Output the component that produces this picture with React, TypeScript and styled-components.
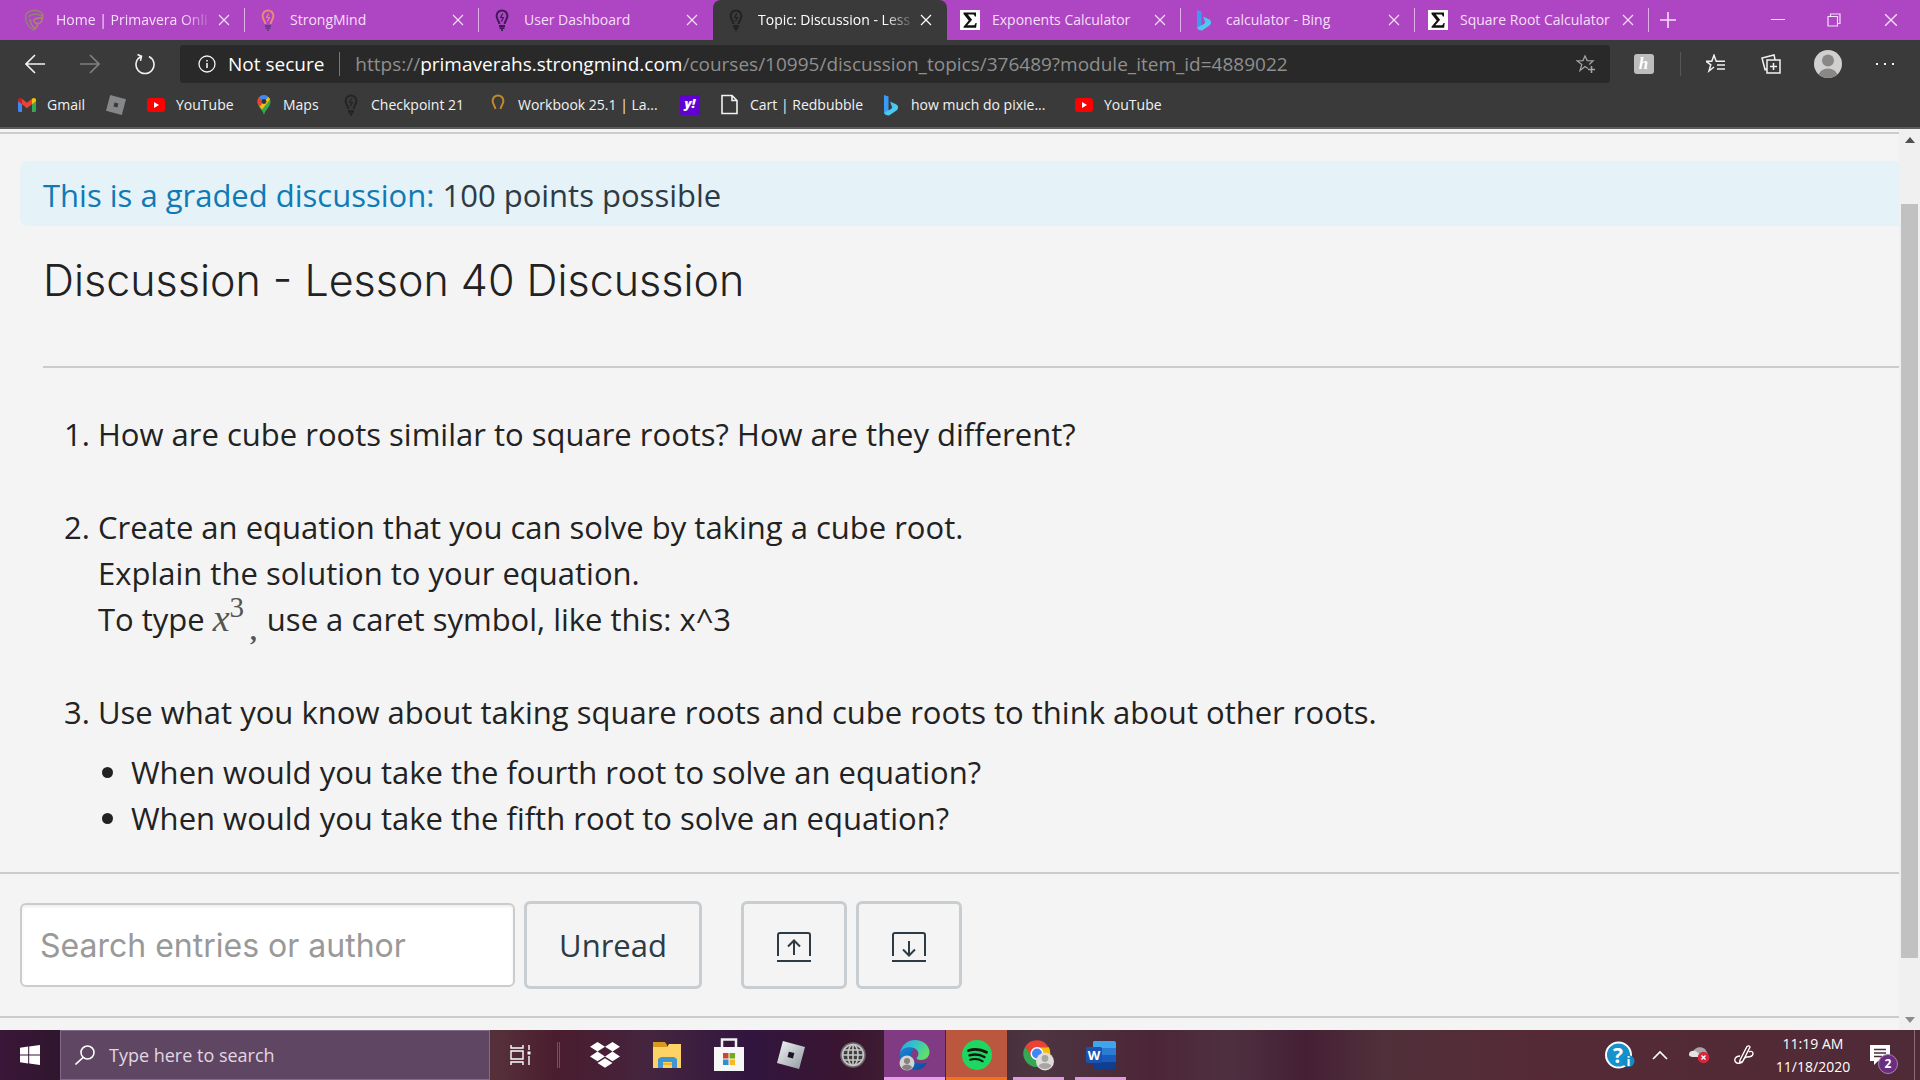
import React from 'react';
import styled, { createGlobalStyle, css } from 'styled-components';

const ui = `"Open Sans", "Noto Sans", sans-serif`;
const heading = `Inter, "Open Sans", sans-serif`;

const GlobalStyle = createGlobalStyle`
  *, *::before, *::after { box-sizing: border-box; }
  body { margin: 0; font-family: ${ui}; background: #f4f4f4; overflow: hidden; }
  button { padding: 0; border: 0; background: none; color: inherit; font: inherit; }
  a { color: inherit; text-decoration: none; }
  svg { display: block; flex: none; }
`;

const Screen = styled.div`
  display: grid;
  grid-template-rows: auto minmax(0, 1fr) auto;
  height: 100vh;
`;

/* ---------- browser chrome ---------- */

const Chrome = styled.header`
  background: #3a3a3a;
  border-bottom: 2px solid #5c5c5c;
`;

const TabStrip = styled.div`
  display: flex;
  height: 40px;
  padding-left: 11px;
  background: #ae45c2;
`;

const Tab = styled.div<{ $active?: boolean }>`
  display: flex;
  align-items: center;
  flex: 0 1 234px;
  min-width: 0;
  padding-left: 13px;
  color: ${p => (p.$active ? '#ffffff' : '#f6dffa')};
  background: ${p => (p.$active ? '#3a3a3a' : 'transparent')};
  border-radius: 8px 8px 0 0;
`;

const TabLabel = styled.span<{ $fade?: boolean }>`
  flex: 1;
  min-width: 0;
  margin: 0 4px 0 12px;
  overflow: hidden;
  white-space: nowrap;
  font-size: 14px;
  line-height: 20px;
  ${p => p.$fade && css`mask-image: linear-gradient(90deg, #000 80%, transparent);`}
`;

const TabEdge = styled.span<{ $visible: boolean }>`
  width: 1px;
  height: 24px;
  margin-left: 14px;
  background: ${p => (p.$visible ? '#e0b0e8' : 'transparent')};
`;

const IconButton = styled.button<{ $w?: number }>`
  display: flex;
  align-items: center;
  justify-content: center;
  flex: none;
  width: ${p => (p.$w ? `${p.$w}px` : 'auto')};
`;

const NewTab = styled(IconButton)`
  color: #f6dffa;
  margin-left: 10px;
`;

const WindowButtons = styled.div`
  display: flex;
  margin-left: auto;
  color: #f6dffa;
`;

const Toolbar = styled.div`
  display: flex;
  align-items: center;
  height: 48px;
  padding-left: 7px;
  color: #f2f2f2;
`;

const AddressBar = styled.div`
  display: flex;
  align-items: center;
  flex: 1;
  height: 38px;
  margin: 0 12px 0 8px;
  padding: 0 14px 0 18px;
  border-radius: 4px;
  background: #292929;
  font-size: 19px;
`;

const Secure = styled.span`
  margin-left: 12px;
  color: #ffffff;
`;

const Rule = styled.span<{ $color: string }>`
  width: 1px;
  height: 24px;
  margin: 0 15px;
  background: ${p => p.$color};
`;

const Url = styled.span`
  flex: 1;
  color: #8f8f8f;
  white-space: nowrap;
  b { color: #ffffff; font-weight: 400; }
`;

const Bookmarks = styled.nav`
  display: flex;
  align-items: center;
  height: 39px;
  padding: 0 0 6px 17px;
  color: #f2f2f2;
  font-size: 14px;
`;

const Bookmark = styled.a<{ $w: number }>`
  display: flex;
  align-items: center;
  gap: 10px;
  flex: 0 1 ${p => p.$w}px;
  white-space: nowrap;
`;

/* ---------- page ---------- */

const Viewport = styled.div`
  display: flex;
  min-height: 0;
  background: #f4f4f4;
`;

const Page = styled.main`
  flex: 1;
  min-width: 0;
  overflow: hidden;
  margin-top: 3px;
  border-top: 2px solid #cccccc;
  color: #222222;
  font-size: 31px;
  line-height: 46px;
`;

const Notice = styled.p`
  margin: 27px 0 0 20px;
  padding: 11px 23px 8px;
  border-radius: 8px 0 0 8px;
  background: #e5f2f8;
  color: #2d3b45;
  em { color: #0f7ab5; font-style: normal; }
`;

const Title = styled.h1`
  margin: 26px 0 0 43px;
  padding-bottom: 58px;
  border-bottom: 2px solid #cccccc;
  font-family: ${heading};
  font-size: 43px;
  font-weight: 300;
  line-height: 56px;
`;

const Questions = styled.ol`
  display: flex;
  flex-direction: column;
  gap: 47px;
  margin: 43px 0 0;
  padding: 0 0 31px 98px;
`;

const SubQuestions = styled.ul`
  margin: 14px 0 0;
  padding: 0 0 0 33px;
  list-style: disc;
`;

const Formula = styled.span`
  margin: 0 10px 0 8px;
  color: #555555;
  font-family: "Liberation Serif", serif;
  font-size: 38px;
  line-height: 0;
  sup { font-size: 29px; }
  sub { font-size: 27px; font-weight: 700; margin-left: 6px; }
`;

const Filters = styled.section`
  display: flex;
  align-items: center;
  padding: 27px 20px;
  border: solid #cccccc;
  border-width: 2px 0;
`;

const SearchInput = styled.input`
  width: 495px;
  height: 84px;
  padding: 0 18px;
  border: 2px solid #cccccc;
  border-radius: 6px;
  background: #ffffff;
  box-shadow: inset 0 2px 3px #eeeeee;
  font-family: ${heading};
  font-size: 32px;
  &::placeholder { color: #999999; opacity: 1; }
`;

const FilterButton = styled.button<{ $w: number; $gap: number }>`
  display: flex;
  align-items: center;
  justify-content: center;
  width: ${p => p.$w}px;
  height: 88px;
  margin-left: ${p => p.$gap}px;
  border: 3px solid #c7cdd1;
  border-radius: 6px;
  color: #2d3b45;
`;

const Scrollbar = styled.div`
  display: grid;
  grid-template-rows: 22px 53fr 754fr 52fr 20px;
  width: 21px;
  background: #f0f0f0;
  color: #505050;
`;

const Thumb = styled.div`
  grid-row: 3;
  margin: 0 2px;
  background: #c1c1c1;
`;

const ScrollArrow = styled(IconButton)<{ $row: number }>`
  grid-row: ${p => p.$row};
`;

/* ---------- taskbar ---------- */

const Taskbar = styled.footer`
  display: flex;
  height: 50px;
  color: #ffffff;
  background: linear-gradient(90deg, #3a1638 0, #30162f 3%, #55303a 26%, #4a1c2e 29%, #44253f 34%,
    #32153f 39%, #3a1530 44%, #4d3540 54%, #4c2638 60%, #4e3040 64%, #452035 68%, #50303a 72%,
    #552a36 80%, #4f2b37 100%);
`;

const TaskSearch = styled.label`
  display: flex;
  align-items: center;
  gap: 14px;
  width: 430px;
  padding: 0 14px;
  border: 1px solid #82698a;
  background: #5f4662;
  input {
    flex: 1;
    min-width: 0;
    padding: 0;
    border: 0;
    outline: 0;
    background: none;
    font: 18px ${ui};
  }
  input::placeholder { color: #e2d6e4; opacity: 1; }
`;

const TaskDivider = styled.span`
  width: 3px;
  height: 26px;
  margin: 12px 14px 0 6px;
  border: solid #75505f;
  border-width: 0 1px;
`;

const TaskItem = styled.button<{ $bg?: string; $line?: string; $inset?: boolean }>`
  display: flex;
  flex-direction: column;
  align-items: center;
  justify-content: center;
  position: relative;
  width: 61px;
  margin-right: 1px;
  background: ${p => p.$bg ?? 'none'};
  &::after {
    content: '';
    position: absolute;
    bottom: 0;
    left: ${p => (p.$inset ? 5 : 0)}px;
    right: ${p => (p.$inset ? 5 : 0)}px;
    height: 3px;
    background: ${p => p.$line ?? 'none'};
  }
`;

const Tray = styled.div`
  display: flex;
  align-items: center;
  margin-left: auto;
`;

const Clock = styled.time`
  width: 90px;
  font-size: 14px;
  line-height: 23px;
  text-align: center;
`;

const ShowDesktop = styled.button`
  width: 6px;
  height: 50px;
  border-left: 1px solid #8a6b76;
`;

/* ---------- drawings ---------- */

type Box = { w: number; h?: number; vb?: string; children: React.ReactNode };
const Line = ({ w, h = w, vb, children }: Box) => (
  <svg width={w} height={h} viewBox={vb ?? `0 0 ${w} ${h}`} fill="none" stroke="currentColor" strokeWidth="1.6" aria-hidden="true">
    {children}
  </svg>
);

const Cross = ({ w = 12 }: { w?: number }) => (
  <Line w={w} vb="0 0 12 12"><path d="M1 1l10 10M11 1L1 11" strokeWidth="1.2" /></Line>
);

const Bulb = ({ color, base = color, bolt = true }: { color: string; base?: string; bolt?: boolean }) => (
  <svg width="20" height="22" viewBox="0 0 20 22" fill="none" stroke={color} aria-hidden="true">
    <path d="M7.4 15c0-3-2.8-4.400-2.800-8.200a5.400 5.400 0 0 1 10.800 0c0 3.800-2.800 5.200-2.800 8.200" strokeWidth="2" />
    {bolt && <path d="M10.800 4.500L8.600 8.500h2.800l-2.100 4" strokeWidth="1.200" />}
    <path d="M7 17h6M7.500 19.200h5M9 21.200h2" stroke={base} strokeWidth="1.800" />
  </svg>
);

const Shield = () => (
  <svg width="20" height="22" viewBox="0 0 20 22" fill="none" strokeWidth="1.600" aria-hidden="true">
    <path d="M1.500 6C4 2.500 8 1 12 1.500c3 .400 5.500 1.500 6.500 3.500" stroke="#9c7d72" />
    <path d="M1.500 6c0 6 2 12 8 15M4 8c4-3.500 10-3.500 14-1" stroke="#8f8079" />
    <path d="M18.500 5c.500 6-1 9-4 9.500-3 .500-5-1.500-4.500-4 3-1.500 6-1.500 8-1M14 15c-1 3-2 4.500-4.500 6M6 10c.500 4 2 7 4.500 9" stroke="#a58675" />
  </svg>
);

const Sigma = () => (
  <svg width="20" height="20" viewBox="0 0 20 20" aria-hidden="true">
    <path fill="#fff" d="M0 0h20v20H0z" />
    <path fill="#111" d="M3.500 2.500h12.500V6.500h-1.300c-.300-1.500-.800-2-2.200-2H7.800l4.300 5.200-4.800 5.500h5.700c1.500 0 2-.700 2.500-2.300h1.200l-.600 4.800H3.500v-1l5.200-6.200-5.200-6.600z" />
  </svg>
);

const Bing = () => (
  <svg width="20" height="22" viewBox="0 0 20 22" aria-hidden="true">
    <defs><linearGradient id="bing" x1="0" y1="0" x2="1" y2="1"><stop stopColor="#49b8ef" /><stop offset="1" stopColor="#48d6f0" /></linearGradient></defs>
    <path fill="#3d9af2" d="M3 1l4.500 1.500V17L3 19z" />
    <path fill="url(#bing)" d="M9 7.500l6 2.700c2.800 1.500 2.500 4.500.800 6L8 21.500c-2.500 0-5-1-5-3l7-3.500 1.200-1.500z" />
  </svg>
);

const Gmail = () => (
  <svg width="20" height="16" viewBox="0 0 20 16" aria-hidden="true">
    <path fill="#4285f4" d="M1 3l4 3v9H2.200C1.500 15 1 14.500 1 13.800z" />
    <path fill="#34a853" d="M15 6l4-3v10.800c0 .700-.500 1.200-1.200 1.200H15z" />
    <path fill="#ea4335" d="M5 1.800l5 4 5-4v5.400l-5 4-5-4z" />
    <path fill="#c5221f" d="M1 3c0-2 2.200-2.600 4-1.200v5.400L1 4.200z" />
    <path fill="#fbbc04" d="M19 3c0-2-2.200-2.600-4-1.200v5.400l4-3z" />
  </svg>
);

const Roblox = ({ w = 20, fill = '#858788', hole = '#3a3a3a' }: { w?: number; fill?: string; hole?: string }) => (
  <svg width={w} height={w} viewBox="0 0 20 20" aria-hidden="true">
    <defs><linearGradient id="rblx" x1="0" y1="0" x2="1" y2="1"><stop stopColor="#f4f6f8" /><stop offset="1" stopColor="#8e979f" /></linearGradient></defs>
    <path fill={fill} d="M4.200 0L20 4.200 15.800 20 0 15.800z" />
    <path fill={hole} d="M8.500 7.600l3.900 1-1 3.900-3.900-1z" />
  </svg>
);

const YouTube = () => (
  <svg width="20" height="14" viewBox="0 0 20 14" aria-hidden="true">
    <rect x="1" width="18" height="14" rx="3" fill="#f00" /><path fill="#fff" d="M8 4l5 3-5 3z" />
  </svg>
);

const MapPin = () => (
  <svg width="18" height="20" viewBox="0 0 18 20" aria-hidden="true">
    <path fill="#34a853" d="M9 20C8 15 2.500 12 2.500 6.500a6.500 6.500 0 0 1 13 0C15.500 12 10 15 9 20z" />
    <path fill="#fbbc04" d="M4.500 11.500L13 2a6 6 0 0 1 2 2.500L7 14.500z" />
    <path fill="#ea4335" d="M3 9C2 6 2.500 4 4 2.300L9 6.500l-4.500 5z" />
    <path fill="#4285f4" d="M4 2.300C6-.400 10.500-.600 13 2L9 6.500z" />
    <circle cx="9" cy="6.500" r="2.400" fill="#24364f" />
  </svg>
);

const YahooBadge = styled.span`
  width: 20px;
  height: 20px;
  border-radius: 2px;
  background: #6001d2;
  color: #ffffff;
  font-size: 13px;
  font-weight: 800;
  font-style: italic;
  line-height: 17px;
  text-align: center;
`;

const HoneyBadge = styled.span`
  width: 20px;
  height: 20px;
  border-radius: 3px;
  background: #bdbdbd;
  color: #ffffff;
  font: italic 700 17px/20px "Liberation Serif", serif;
  text-align: center;
`;

const PageIcon = () => (
  <Line w={20} h={21}><path d="M2 1.500h10l5 5v13H2zM12 1.500v5h5" /></Line>
);

const Person = ({ w = 28 }: { w?: number }) => (
  <svg width={w} height={w} viewBox="0 0 28 28" aria-hidden="true">
    <defs><clipPath id="face"><circle cx="14" cy="14" r="14" /></clipPath></defs>
    <g clipPath="url(#face)"><path fill="#d2d0ce" d="M0 0h28v28H0z" /><circle cx="14" cy="10.500" r="6" fill="#8a8886" /><ellipse cx="14" cy="26" rx="9.500" ry="7.500" fill="#8a8886" /></g>
  </svg>
);

const Dropbox = () => (
  <svg width="30" height="26" viewBox="0 0 30 26" fill="#fff" aria-hidden="true">
    <path d="M7.500 0L15 4.800 7.500 9.600 0 4.800zM22.500 0L30 4.800l-7.500 4.800L15 4.800zM7.500 9.600l7.500 4.800-7.500 4.800L0 14.400zM22.500 9.600l7.500 4.800-7.500 4.800-7.500-4.800zM15 16.200l7.500 4.800-7.500 4.800L7.500 21z" />
  </svg>
);

const Folder = () => (
  <svg width="28" height="26" viewBox="0 -1 28 26" aria-hidden="true">
    <path fill="#d99a1c" d="M0 -1h12l2 3v5H0z" /><path fill="#fcd364" d="M0 4h14l2-3h12v24H0z" />
    <path fill="#3f96d0" d="M5 25V16l3-2h13l3 2v9h-5v-6h-9v6z" /><path fill="#f2b233" d="M10 20h9v2h-9z" />
  </svg>
);

const Store = () => (
  <svg width="30" height="34" viewBox="0 -2 30 34" aria-hidden="true">
    <path d="M8 9V-.500h14V9" fill="none" stroke="#f1f1f1" strokeWidth="2.500" /><path fill="#f6f6f6" d="M0 7h30v24H0z" />
    <path fill="#c9472a" d="M9 13h5.500v5.500H9z" /><path fill="#71ab1e" d="M15.500 13H21v5.500h-5.500z" />
    <path fill="#2c90d4" d="M9 19.500h5.500V25H9z" /><path fill="#fbb91b" d="M15.500 19.500H21V25h-5.500z" />
  </svg>
);

const Globe = () => (
  <svg width="26" height="26" viewBox="0 0 26 26" fill="none" stroke="#c6c6c6" strokeWidth="1.600" aria-hidden="true">
    <circle cx="13" cy="13" r="12" fill="#3e3e3e" stroke="#6a6a6a" /><circle cx="13" cy="13" r="10.500" />
    <ellipse cx="13" cy="13" rx="5" ry="10.500" /><path d="M13 2.500v21M2.500 13h21M4 8h18M4 18h18" />
  </svg>
);

const Edge = () => (
  <svg width="34" height="34" viewBox="0 0 34 34" aria-hidden="true">
    <defs>
      <linearGradient id="edgeTop" x1="0" y1="0" x2="1" y2=".5"><stop stopColor="#2aa5df" /><stop offset=".5" stopColor="#34c4c8" /><stop offset="1" stopColor="#5fe06c" /></linearGradient>
      <linearGradient id="edgeLow" x1="0" y1="0" x2="1" y2="1"><stop stopColor="#1a86d8" /><stop offset="1" stopColor="#0c4a97" /></linearGradient>
    </defs>
    <path fill="url(#edgeLow)" d="M2 15C4 8 13 7 17 12c-5 0-5 6-2 10 3 3.500 9 4.500 14 2.500C26 31 20 33 14 31 6 28 1 22 2 15z" />
    <path fill="url(#edgeTop)" d="M2 15C4 6 10 2 17 2c8 0 14.500 5.500 14.500 12 0 5-4 8-8.500 8-3 0-5-1-4-2.500 3-3.500 1-8-3-9.500C10 8 4 10 2 15z" />
    <circle cx="9" cy="25" r="7.500" fill="#d5d3d1" /><circle cx="9" cy="23" r="3" fill="#858381" /><path fill="#858381" d="M4 29.500c1-4 9-4 10 0-3 3.500-7 3.500-10 0z" />
  </svg>
);

const Spotify = () => (
  <svg width="30" height="30" viewBox="0 0 30 30" fill="none" stroke="#10150f" strokeLinecap="round" aria-hidden="true">
    <circle cx="15" cy="15" r="15" fill="#1ed760" stroke="none" />
    <path d="M6.500 10.500c6-1.800 12.500-1.200 18 1.800" strokeWidth="2.800" /><path d="M7.500 15.300c5-1.500 10.500-.900 15 1.700" strokeWidth="2.400" /><path d="M8.200 19.800c4.200-1.200 8.800-.700 12.500 1.500" strokeWidth="2" />
  </svg>
);

const ChromeLogo = () => (
  <svg width="32" height="32" viewBox="0 0 32 32" aria-hidden="true">
    <path fill="#34a853" d="M2.300 7.500A13.500 13.500 0 0 0 14 28l6-9-10-1z" />
    <path fill="#fbbc04" d="M14 28A13.500 13.500 0 0 0 25.700 8H14l6 11z" />
    <path fill="#ea4335" d="M2.300 7.500A13.500 13.500 0 0 1 25.700 8.500H14L9 18z" />
    <circle cx="14" cy="14.500" r="6.500" fill="#fff" /><circle cx="14" cy="14.500" r="5" fill="#4285f4" />
    <circle cx="22" cy="22.500" r="9" fill="#deddd9" /><circle cx="22" cy="19.500" r="3.400" fill="#a8a6a3" /><path fill="#a8a6a3" d="M15.500 27c1.500-4 11.500-4 13 0-3 4-10 4-13 0z" />
  </svg>
);

const WordLogo = () => (
  <svg width="30" height="28" viewBox="0 0 30 28" aria-hidden="true">
    <path fill="#41a5ee" d="M8 0h20q2 0 2 2v5H7V1z" /><path fill="#2b7cd3" d="M7 7h23v7H7z" />
    <path fill="#185abd" d="M7 14h23v7H7z" /><path fill="#103f91" d="M7 21h23v5q0 2-2 2H8q-1 0-1-2z" />
    <rect y="6" width="16" height="16" rx="1.500" fill="#1a52ae" />
    <text x="8" y="19" fill="#fff" fontFamily="Open Sans" fontWeight="700" fontSize="13" textAnchor="middle">W</text>
  </svg>
);

const Help = () => (
  <svg width="30" height="28" viewBox="0 0 30 28" aria-hidden="true">
    <circle cx="13.500" cy="14" r="12.500" fill="#1592cc" stroke="#fff" strokeWidth="2" />
    <text x="13" y="21.500" fill="#fff" fontFamily="Open Sans" fontWeight="700" fontSize="21" textAnchor="middle">?</text>
    <circle cx="23.500" cy="20" r="6" fill="#138bc6" /><text x="23.500" y="25" fill="#fff" fontFamily="Open Sans" fontWeight="700" fontSize="13" textAnchor="middle">i</text>
  </svg>
);

const Cloud = () => (
  <svg width="22" height="20" viewBox="0 0 22 20" aria-hidden="true">
    <path fill="#a8a3a5" d="M4 8c0-5 7-8 12-4l3 5-6 4z" /><path fill="#e5e2e3" d="M0 9.500C0 5 7 5 8.500 7.500L17 12H4C1 12 0 11 0 9.500z" />
    <circle cx="14.500" cy="12.500" r="5.800" fill="#d7263d" /><path d="M12.500 10.500l4 4M16.500 10.500l-4 4" stroke="#fff" strokeWidth="1.300" />
  </svg>
);

const NotificationBell = styled.button`
  display: flex;
  position: relative;
  width: 56px;
  height: 50px;
  padding: 15px 0 0 12px;
`;

const Count = styled.span`
  position: absolute;
  left: 20px;
  top: 24px;
  width: 20px;
  height: 20px;
  border: 1px solid #a97fb3;
  border-radius: 50%;
  background: #6b2d80;
  font-size: 12px;
  font-weight: 700;
  line-height: 18px;
  text-align: center;
`;

const tabs = [
  { label: 'Home | Primavera Onli', icon: <Shield />, fade: true, edge: true },
  { label: 'StrongMind', icon: <Bulb color="#ec8a72" base="#6b3b8a" />, edge: true },
  { label: 'User Dashboard', icon: <Bulb color="#3d1a55" /> },
  { label: 'Topic: Discussion - Less', icon: <Bulb color="#222222" />, fade: true, active: true },
  { label: 'Exponents Calculator', icon: <Sigma />, edge: true },
  { label: 'calculator - Bing', icon: <Bing />, edge: true },
  { label: 'Square Root Calculator', icon: <Sigma />, edge: true },
];

const bookmarks = [
  { label: 'Gmail', icon: <Gmail />, w: 89 },
  { label: '', icon: <Roblox />, w: 40 },
  { label: 'YouTube', icon: <YouTube />, w: 109 },
  { label: 'Maps', icon: <MapPin />, w: 86 },
  { label: 'Checkpoint 21', icon: <Bulb color="#242424" />, w: 147 },
  { label: 'Workbook 25.1 | La...', icon: <Bulb color="#c08a2c" base="#3a3a3a" bolt={false} />, w: 192 },
  { label: '', icon: <YahooBadge>y!</YahooBadge>, w: 40 },
  { label: 'Cart | Redbubble', icon: <PageIcon />, w: 161 },
  { label: 'how much do pixie...', icon: <Bing />, w: 193 },
  { label: 'YouTube', icon: <YouTube />, w: 100 },
];

const taskItems = [
  { name: 'Dropbox', icon: <Dropbox /> },
  { name: 'File Explorer', icon: <Folder /> },
  { name: 'Microsoft Store', icon: <Store /> },
  { name: 'Roblox', icon: <Roblox w={28} fill="url(#rblx)" hole="#1d1426" /> },
  { name: 'Network', icon: <Globe /> },
  { name: 'Microsoft Edge', icon: <Edge />, bg: '#803b83', line: '#e79cec' },
  { name: 'Spotify', icon: <Spotify />, bg: '#bb573f', line: '#f5701c' },
  { name: 'Google Chrome', icon: <ChromeLogo />, line: '#dd9be0', inset: true },
  { name: 'Word', icon: <WordLogo />, line: '#dd9be0', inset: true },
];

export default function App() {
  return (
    <Screen>
      <GlobalStyle />
      <Chrome>
        <TabStrip>
          {tabs.map(t => (
            <Tab key={t.label} $active={t.active}>
              {t.icon}
              <TabLabel $fade={t.fade}>{t.label}</TabLabel>
              <IconButton aria-label="Close tab"><Cross /></IconButton>
              <TabEdge $visible={!!t.edge} />
            </Tab>
          ))}
          <NewTab aria-label="New tab"><Line w={18}><path d="M9 1v16M1 9h16" /></Line></NewTab>
          <WindowButtons>
            <IconButton $w={56} aria-label="Minimize"><Line w={14}><path d="M0 6.500h14" strokeWidth="1" /></Line></IconButton>
            <IconButton $w={56} aria-label="Restore"><Line w={14}><path d="M1 3.500h9.500V13H1zM3.500 3.500V1H13v9.500h-2.500" strokeWidth="1.200" /></Line></IconButton>
            <IconButton $w={58} aria-label="Close window"><Cross w={14} /></IconButton>
          </WindowButtons>
        </TabStrip>
        <Toolbar>
          <IconButton $w={55} aria-label="Back"><Line w={20}><path d="M20 10H1M10 1L1 10l9 9" /></Line></IconButton>
          <IconButton $w={55} aria-label="Forward"><Line w={20}><path d="M0 10h19M10 1l9 9-9 9" stroke="#808080" /></Line></IconButton>
          <IconButton $w={55} aria-label="Refresh"><Line w={20} h={22}><path d="M14 3.500a9 9 0 1 1-8 0M2.500 1.500l4 1.800-1 4.500" /></Line></IconButton>
          <AddressBar>
            <Line w={18}><circle cx="9" cy="9" r="8" strokeWidth="1.300" /><path d="M9 8v5M9 5v1.500" /></Line>
            <Secure>Not secure</Secure>
            <Rule $color="#777777" />
            <Url>https://<b>primaverahs.strongmind.com</b>/courses/10995/discussion_topics/376489?module_item_id=4889022</Url>
            <IconButton aria-label="Add to favorites">
              <Line w={20}><path d="M12 12.500l-3-2-5 4 1.800-6L1 4.800l6-.200L9 0l2.200 4.600 6 .200-4 3.700" transform="translate(0 2)" stroke="#a5a5a5" strokeWidth="1.200" /><path d="M15.500 12v7M12 15.500h7" stroke="#a5a5a5" /></Line>
            </IconButton>
          </AddressBar>
          <IconButton $w={43} aria-label="Honey"><HoneyBadge>h</HoneyBadge></IconButton>
          <Rule $color="#565656" />
          <IconButton $w={40} aria-label="Favorites"><Line w={20}><path d="M8 13l-5 4 1.800-6.200L0 7.200h5.800L8 1.200l2.200 6H19M11 11h8M11 15h8" strokeWidth="1.500" /></Line></IconButton>
          <IconButton $w={70} aria-label="Collections"><Line w={20}><path d="M6 6h13v13H6zM12.500 9v7M9 12.500h7M6 15l-2 .5L1 4l12-3 1 4.500" strokeWidth="1.500" /></Line></IconButton>
          <IconButton $w={44} aria-label="Profile"><Person /></IconButton>
          <IconButton $w={70} aria-label="Settings and more"><Line w={20} h={4}><path d="M1 2h2M9 2h2M17 2h2" strokeWidth="2" /></Line></IconButton>
        </Toolbar>
        <Bookmarks>
          {bookmarks.map((b, i) => (
            <Bookmark key={i} href="#" $w={b.w}>{b.icon}{b.label}</Bookmark>
          ))}
        </Bookmarks>
      </Chrome>

      <Viewport>
        <Page>
          <Notice><em>This is a graded discussion:</em> 100 points possible</Notice>
          <Title>Discussion - Lesson 40 Discussion</Title>
          <Questions>
            <li>How are cube roots similar to square roots? How are they different?</li>
            <li>
              Create an equation that you can solve by taking a cube root.<br />
              Explain the solution to your equation.<br />
              To type<Formula><i>x</i><sup>3</sup><sub>,</sub></Formula>use a caret symbol, like this: x^3
            </li>
            <li>
              Use what you know about taking square roots and cube roots to think about other roots.
              <SubQuestions>
                <li>When would you take the fourth root to solve an equation?</li>
                <li>When would you take the fifth root to solve an equation?</li>
              </SubQuestions>
            </li>
          </Questions>
          <Filters>
            <SearchInput type="text" placeholder="Search entries or author" aria-label="Search entries or author" />
            <FilterButton $w={178} $gap={9}>Unread</FilterButton>
            <FilterButton $w={106} $gap={39} aria-label="Collapse replies">
              <Line w={36} h={36} vb="0 -4 36 36"><path d="M2 25V4q0-2 2-2h28q2 0 2 2v21M18 24V10M12 15.500l6-6 6 6" strokeWidth="2" /><path d="M1 30h34" strokeWidth="2" /></Line>
            </FilterButton>
            <FilterButton $w={106} $gap={9} aria-label="Expand replies">
              <Line w={36} h={36} vb="0 -4 36 36"><path d="M2 25V4q0-2 2-2h28q2 0 2 2v21M18 10v14M12 18.500l6 6 6-6" strokeWidth="2" /><path d="M1 30h34" strokeWidth="2" /></Line>
            </FilterButton>
          </Filters>
        </Page>
        <Scrollbar>
          <ScrollArrow $row={1} aria-label="Scroll up"><Line w={10} h={6}><path d="M0 6l5-6 5 6z" fill="currentColor" stroke="none" /></Line></ScrollArrow>
          <Thumb />
          <ScrollArrow $row={5} aria-label="Scroll down"><Line w={10} h={6}><path d="M0 0l5 6 5-6z" fill="#8c8c8c" stroke="none" /></Line></ScrollArrow>
        </Scrollbar>
      </Viewport>

      <Taskbar>
        <IconButton $w={60} aria-label="Start">
          <svg width="20" height="20" viewBox="0 0 20 20" fill="#fff" aria-hidden="true"><path d="M0 2.800l8.200-1.200v8H0zM9.200 1.500L20 0v9.600H9.200zM0 10.500h8.200v8L0 17.300zM9.200 10.500H20V20L9.200 18.600z" /></svg>
        </IconButton>
        <TaskSearch>
          <Line w={20}><circle cx="12.500" cy="7.500" r="6.500" /><path d="M8 12.500L.500 19.500" /></Line>
          <input type="text" placeholder="Type here to search" />
        </TaskSearch>
        <IconButton $w={61} aria-label="Task view">
          <Line w={22} h={20}><path d="M1 0v3h12V0M1 20v-3h12v3M1 6h12v8H1zM19 0v5M19 11v9" strokeWidth="1.400" /><path d="M17.500 6.500h3v3h-3z" fill="currentColor" stroke="none" /></Line>
        </IconButton>
        <TaskDivider />
        {taskItems.map(t => (
          <TaskItem key={t.name} aria-label={t.name} $bg={t.bg} $line={t.line} $inset={t.inset}>{t.icon}</TaskItem>
        ))}
        <Tray>
          <IconButton $w={40} aria-label="Help"><Help /></IconButton>
          <IconButton $w={40} aria-label="Show hidden icons"><Line w={16} h={10}><path d="M1 9l7-7 7 7" /></Line></IconButton>
          <IconButton $w={40} aria-label="OneDrive"><Cloud /></IconButton>
          <IconButton $w={48} aria-label="Windows Ink"><Line w={20}><path d="M6 15L13 1.500q2-1.500 3 .500L9 16l-3.500 2zM6 11c-5 0-6 4-4.500 6S8 19 9 16s2-4 4-4c4 0 6-1 6-3.500S16 6 15 7" strokeWidth="1.400" /></Line></IconButton>
          <Clock>11:19 AM<br />11/18/2020</Clock>
          <NotificationBell aria-label="Notifications">
            <Line w={20} h={20}><path d="M0 0h20v16H8l-4 4v-4H0z" fill="#fff" stroke="none" /><path d="M4 4.500h12M4 8h12M4 11.500h8" stroke="#4f2b37" strokeWidth="1.300" /></Line>
            <Count>2</Count>
          </NotificationBell>
          <ShowDesktop aria-label="Show desktop" />
        </Tray>
      </Taskbar>
    </Screen>
  );
}
